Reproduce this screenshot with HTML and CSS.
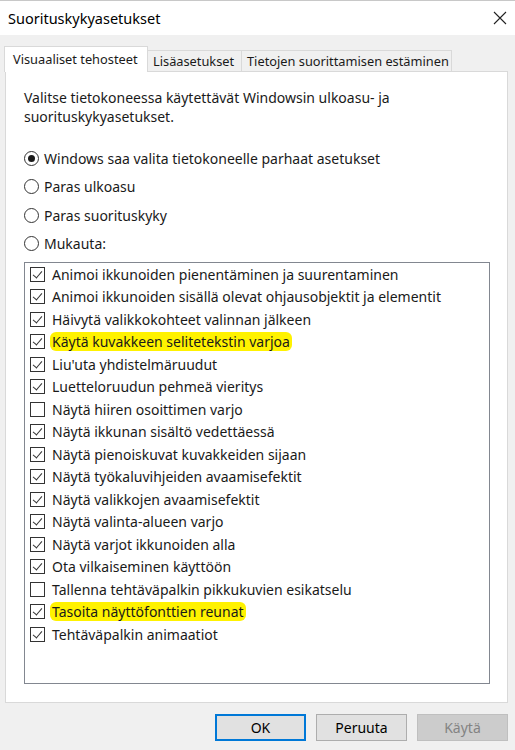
FILE: index.html
```html
<!DOCTYPE html>
<html lang="fi">
<head>
<meta charset="utf-8">
<title>Suorituskykyasetukset</title>
<link rel="stylesheet" href="styles.css">
</head>
<body>
<div class="window">
  <div class="titlebar">
    <span class="title">Suorituskykyasetukset</span>
    <svg class="close" width="14" height="14" viewBox="0 0 14 14"><path d="M1 1 L13 13 M13 1 L1 13" stroke="#222" stroke-width="1.1" fill="none"/></svg>
  </div>
  <div class="body">
    <div class="tabs">
      <div class="tab active">Visuaaliset tehosteet</div>
      <div class="tab">Lisäasetukset</div>
      <div class="tab">Tietojen suorittamisen estäminen</div>
    </div>
    <div class="panel">
      <p class="desc">Valitse tietokoneessa käytettävät Windowsin ulkoasu- ja suorituskykyasetukset.</p>
      <div class="radios">
        <div class="radio-row"><span class="radio checked"></span>Windows saa valita tietokoneelle parhaat asetukset</div>
        <div class="radio-row"><span class="radio"></span>Paras ulkoasu</div>
        <div class="radio-row"><span class="radio"></span>Paras suorituskyky</div>
        <div class="radio-row"><span class="radio"></span>Mukauta:</div>
      </div>
      <div class="listbox">
        <div class="item"><span class="cb on"></span><span>Animoi ikkunoiden pienentäminen ja suurentaminen</span></div>
        <div class="item"><span class="cb on"></span><span>Animoi ikkunoiden sisällä olevat ohjausobjektit ja elementit</span></div>
        <div class="item"><span class="cb on"></span><span>Häivytä valikkokohteet valinnan jälkeen</span></div>
        <div class="item"><span class="cb on"></span><span class="hl">Käytä kuvakkeen selitetekstin varjoa</span></div>
        <div class="item"><span class="cb on"></span><span>Liu'uta yhdistelmäruudut</span></div>
        <div class="item"><span class="cb on"></span><span>Luetteloruudun pehmeä vieritys</span></div>
        <div class="item"><span class="cb"></span><span>Näytä hiiren osoittimen varjo</span></div>
        <div class="item"><span class="cb on"></span><span>Näytä ikkunan sisältö vedettäessä</span></div>
        <div class="item"><span class="cb on"></span><span>Näytä pienoiskuvat kuvakkeiden sijaan</span></div>
        <div class="item"><span class="cb on"></span><span>Näytä työkaluvihjeiden avaamisefektit</span></div>
        <div class="item"><span class="cb on"></span><span>Näytä valikkojen avaamisefektit</span></div>
        <div class="item"><span class="cb on"></span><span>Näytä valinta-alueen varjo</span></div>
        <div class="item"><span class="cb on"></span><span>Näytä varjot ikkunoiden alla</span></div>
        <div class="item"><span class="cb on"></span><span>Ota vilkaiseminen käyttöön</span></div>
        <div class="item"><span class="cb"></span><span>Tallenna tehtäväpalkin pikkukuvien esikatselu</span></div>
        <div class="item"><span class="cb on"></span><span class="hl">Tasoita näyttöfonttien reunat</span></div>
        <div class="item"><span class="cb on"></span><span>Tehtäväpalkin animaatiot</span></div>
      </div>
    </div>
    <div class="buttons">
      <button class="btn default">OK</button>
      <button class="btn">Peruuta</button>
      <button class="btn disabled">Käytä</button>
    </div>
  </div>
</div>
</body>
</html>
```

FILE: styles.css
```css
* { box-sizing: border-box; }
html, body { margin: 0; padding: 0; }
body {
  width: 515px;
  height: 750px;
  background: #f0f0f0;
  font-family: "Noto Sans", "Open Sans", sans-serif;
  font-size: 14px;
  color: #1a1a1a;
  overflow: hidden;
}
.window {
  display: flex;
  flex-direction: column;
  height: 750px;
  border-top: 1px solid #c8c8c8;
}
.titlebar {
  height: 34px;
  background: #ffffff;
  display: flex;
  align-items: center;
  justify-content: space-between;
  padding: 0 8px 0 8px;
}
.title { font-size: 14.5px; color: #000; }
.body {
  flex: 1;
  display: flex;
  flex-direction: column;
  padding-top: 11px;
}
.tabs {
  display: flex;
  align-items: flex-end;
  padding-left: 4px;
  height: 25px;
  position: relative;
  z-index: 1;
}
.tab {
  height: 21px;
  padding: 0 5px;
  border: 1px solid #d9d9d9;
  border-bottom: none;
  border-left: none;
  background: #f0f0f0;
  font-size: 12.8px;
  line-height: 20px;
  white-space: nowrap;
}
.tab.active {
  height: 26px;
  background: #ffffff;
  border-left: 1px solid #d9d9d9;
  padding: 2px 8px 0 8px;
  margin-bottom: -1px;
  width: 144px;
}
.tab:nth-child(2) { width: 94px; }
.tab:nth-child(3) { width: 210px; }
.panel {
  margin-left: 5px;
  width: 503px;
  height: 632px;
  background: #ffffff;
  border: 1px solid #d9d9d9;
  padding: 16px 0 0 18px;
  display: flex;
  flex-direction: column;
}
.desc {
  margin: 0;
  width: 440px;
  line-height: 19px;
}
.radios {
  margin-top: 18px;
  display: flex;
  flex-direction: column;
}
.radio-row {
  height: 28.5px;
  display: flex;
  align-items: center;
  gap: 5px;
}
.radio {
  width: 15px;
  height: 15px;
  border: 1px solid #333;
  border-radius: 50%;
  display: flex;
  align-items: center;
  justify-content: center;
  flex: none;
}
.radio.checked::after {
  content: "";
  width: 7px;
  height: 7px;
  border-radius: 50%;
  background: #1a1a1a;
}
.listbox {
  margin-top: 4px;
  width: 466px;
  height: 422px;
  border: 1px solid #828790;
  padding-top: 0;
  padding-left: 5px;
}
.item {
  height: 22.5px;
  display: flex;
  align-items: center;
  gap: 7px;
}
.cb {
  width: 15px;
  height: 15px;
  border: 1px solid #333;
  flex: none;
  position: relative;
}
.cb.on::after {
  content: "";
  position: absolute;
  left: 4px;
  top: 1px;
  width: 4px;
  height: 8px;
  border-right: 1.2px solid #333;
  border-bottom: 1.2px solid #333;
  transform: rotate(40deg);
}
.hl {
  background: #fff200;
  border-radius: 6px;
  padding: 0 2px;
  margin-left: -2px;
}
.buttons {
  display: flex;
  justify-content: flex-end;
  gap: 10px;
  padding-right: 7px;
  margin-top: 11px;
}
.btn {
  width: 91px;
  height: 27px;
  background: #e1e1e1;
  border: 1px solid #adadad;
  font-family: inherit;
  font-size: 14px;
  color: #000;
  padding: 0;
}
.btn.default { border: 2px solid #0078d7; }
.btn.disabled {
  background: #cccccc;
  border-color: #bfbfbf;
  color: #838383;
}
```
